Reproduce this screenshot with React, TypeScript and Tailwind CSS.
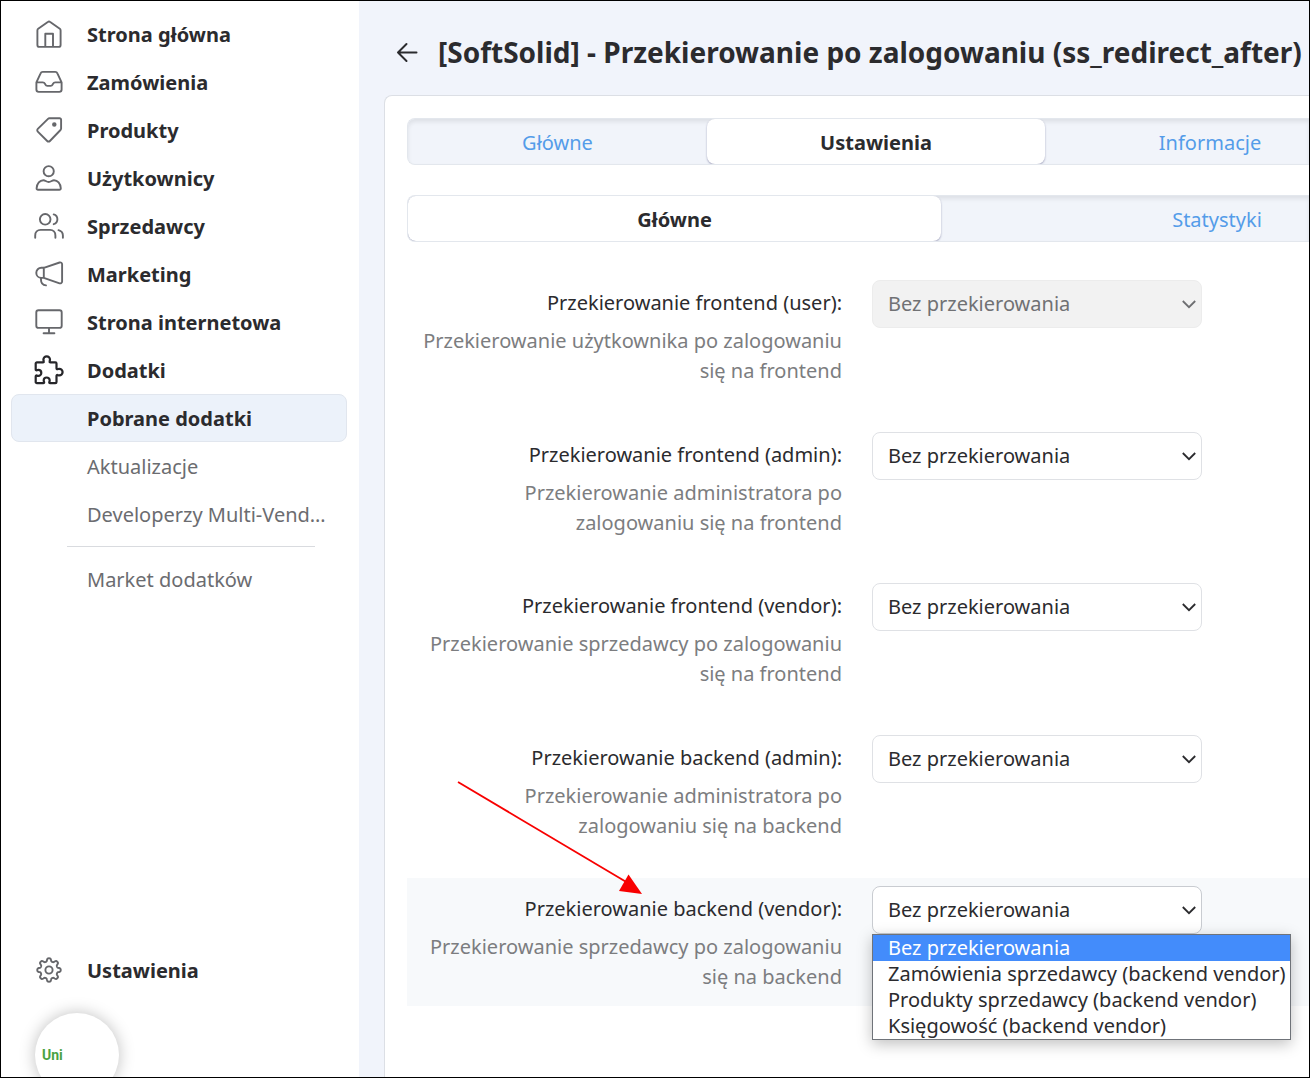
import React, { useState } from "react";

interface NavItem {
  label: string;
  icon: React.ReactNode;
  dark?: boolean;
}

interface RedirectField {
  id: string;
  label: string;
  help: string[];
  disabled?: boolean;
  open?: boolean;
}

interface TabItem {
  label: string;
  width: string;
}

// wavy outline with eight rounded teeth around the centre of a 32px box
const gearPath = (() => {
  const points: string[] = [];
  for (let i = 0; i < 160; i++) {
    const a = (i / 160) * Math.PI * 2;
    const r = 10.2 + 1.6 * Math.tanh(1.8 * Math.cos(8 * a));
    points.push(
      `${(16 + r * Math.cos(a)).toFixed(2)} ${(16 + r * Math.sin(a)).toFixed(2)}`,
    );
  }
  return `M${points.join("L")}Z`;
})();

const navItems: NavItem[] = [
  {
    label: "Strona główna",
    icon: (
      <path d="M6.3 28.9h19.4a1.9 1.9 0 0 0 1.9-1.9V12.4a2 2 0 0 0-.8-1.6L17.2 4a2 2 0 0 0-2.4 0l-9.6 6.8a2 2 0 0 0-.8 1.6V27a1.9 1.9 0 0 0 1.900 1.900zM12.3 28.9V15.8H20v13.100" />
    ),
  },
  {
    label: "Zamówienia",
    icon: (
      <path d="M3.4 16.4v7.2a2.3 2.3 0 0 0 2.3 2.3h20.6a2.3 2.3 0 0 0 2.3-2.3v-7.2L24.4 7.3a2.3 2.3 0 0 0-2.1-1.4H9.7a2.3 2.3 0 0 0-2.1 1.4zM3.4 16.4h6.4c1 0 1.7.5 2.1 1.3l.5 1c.4.8 1 1.2 1.9 1.2h3.4c.9 0 1.5-.4 1.9-1.2l.5-1c.4-.8 1.1-1.3 2.1-1.3h6.4" />
    ),
  },
  {
    label: "Produkty",
    icon: (
      <>
        <path d="M16.4 4.3h10.2a1.5 1.5 0 0 1 1.5 1.5v8.8c0 .6-.2 1-.6 1.4L16.9 27a1.9 1.9 0 0 1-2.7 0l-9.400-9.400a1.900 1.900 0 0 1 0-2.700L15 4.900c.4-.4.9-.6 1.400-.6z" />
        <circle cx="21.3" cy="10.6" r="1.3" fill="currentColor" />
      </>
    ),
  },
  {
    label: "Użytkownicy",
    icon: (
      <>
        <circle cx="15.7" cy="9.2" r="5.1" />
        <path d="M5 27.8h21.4a1.4 1.4 0 0 0 1.4-1.5c-.3-4.9-3.3-8.1-6.8-8.1-1.9 0-2.9 1.8-5.3 1.8s-3.4-1.8-5.3-1.8c-3.5 0-6.5 3.2-6.8 8.1A1.4 1.4 0 0 0 5 27.8z" />
      </>
    ),
  },
  {
    label: "Sprzedawcy",
    icon: (
      <>
        <circle cx="12.2" cy="9.3" r="5.3" />
        <path d="M20.7 4.4a5.1 5.1 0 0 1 0 9.8M2.2 27.8v-2.4c0-3.2 2.2-5.5 5.4-5.5h9.4c3.2 0 5.4 2.3 5.4 5.5v2.4M25.5 20.2c2.7.7 4.4 2.7 4.4 5.4v2.2" />
      </>
    ),
  },
  {
    label: "Marketing",
    icon: (
      <path d="M10.8 9.8l15.8-5.3a1.9 1.9 0 0 1 2.5 1.8v17.2a1.9 1.9 0 0 1-2.5 1.8l-15.8-5.400zM10.8 9.8H8.3a5 5 0 0 0-5 5v.1a5 5 0 0 0 5 5h2.5M8 20v1.8c0 3.2 1.7 5.4 5 5.6" />
    ),
  },
  {
    label: "Strona internetowa",
    icon: (
      <>
        <rect x="3.3" y="4.3" width="25.4" height="17.6" rx="2.2" />
        <path d="M16 22v5M10.6 27.3h10.8" />
      </>
    ),
  },
  {
    label: "Dodatki",
    dark: true,
    icon: (
      <path d="M3.9 8.4h6c.8 0 1.1-.5.9-1.1-.2-.7-.4-1-.4-1.7a3.3 3.3 0 0 1 6.6 0c0 .7-.2 1-.4 1.7-.2.6.1 1.1.9 1.1h4.8a1.2 1.2 0 0 1 1.2 1.2v4.7c0 .8.5 1.1 1.1.9.7-.2 1-.4 1.7-.4a3.3 3.3 0 0 1 0 6.6c-.7 0-1-.2-1.7-.4-.6-.2-1.1.1-1.1.9v6a1.2 1.2 0 0 1-1.2 1.2h-5.2c-.7 0-1-.5-.8-1.1.3-.6.4-.9.4-1.5a3 3 0 0 0-6 0c0 .6.1.9.4 1.5.2.6-.1 1.1-.8 1.1H3.900a1.2 1.2 0 0 1-1.2-1.2v-5.5c0-.8.5-1.1 1.1-.9.6.3.9.4 1.5.4a3 3 0 0 0 0-6c-.6 0-.9.1-1.5.4-.6.2-1.1-.1-1.1-.9V9.6a1.2 1.2 0 0 1 1.2-1.2z" />
    ),
  },
];

const mainTabs: TabItem[] = [
  { label: "Główne", width: "w-[299px]" },
  { label: "Ustawienia", width: "w-[338px]" },
  { label: "Informacje", width: "w-[330px]" },
];

const sectionTabs: TabItem[] = [
  { label: "Główne", width: "w-[533px]" },
  { label: "Statystyki", width: "w-[552px]" },
];

const fields: RedirectField[] = [
  {
    id: "frontend_user",
    label: "Przekierowanie frontend (user):",
    help: ["Przekierowanie użytkownika po zalogowaniu", "się na frontend"],
    disabled: true,
  },
  {
    id: "frontend_admin",
    label: "Przekierowanie frontend (admin):",
    help: ["Przekierowanie administratora po", "zalogowaniu się na frontend"],
  },
  {
    id: "frontend_vendor",
    label: "Przekierowanie frontend (vendor):",
    help: ["Przekierowanie sprzedawcy po zalogowaniu", "się na frontend"],
  },
  {
    id: "backend_admin",
    label: "Przekierowanie backend (admin):",
    help: ["Przekierowanie administratora po", "zalogowaniu się na backend"],
  },
  {
    id: "backend_vendor",
    label: "Przekierowanie backend (vendor):",
    help: ["Przekierowanie sprzedawcy po zalogowaniu", "się na backend"],
    open: true,
  },
];

const options = [
  "Bez przekierowania",
  "Zamówienia sprzedawcy (backend vendor)",
  "Produkty sprzedawcy (backend vendor)",
  "Księgowość (backend vendor)",
];

const NavLink: React.FC<NavItem> = ({ label, icon, dark }) => (
  <a
    href="#"
    className="flex h-12 items-center gap-[22px] pl-[22px] text-xl font-bold text-[#2b2b2e]"
  >
    <svg
      viewBox="0 0 32 32"
      className={`size-8 shrink-0 ${dark ? "text-[#26262a]" : "text-[#66676b]"}`}
      fill="none"
      stroke="currentColor"
      strokeWidth={dark ? 2.2 : 1.9}
      strokeLinecap="round"
      strokeLinejoin="round"
      aria-hidden="true"
    >
      {icon}
    </svg>
    <span className="pt-0.5">{label}</span>
  </a>
);

const Sidebar = () => (
  <aside className="flex w-[358px] shrink-0 flex-col bg-white px-2.5 pt-[9px]">
    <nav className="flex flex-1 flex-col">
      {navItems.map((item) => (
        <NavLink key={item.label} {...item} />
      ))}
      <a
        href="#"
        className="mr-0.5 flex h-12 items-center rounded-lg border border-[#e1e6ee] bg-[#ecf2fa] pt-0.5 pl-[75px] text-xl font-bold text-[#2b2b2e]"
      >
        Pobrane dodatki
      </a>
      <a href="#" className="flex h-12 items-center pt-0.5 pl-19 text-xl text-[#6b6c70]">
        Aktualizacje
      </a>
      <a href="#" className="flex h-12 items-center pt-0.5 pl-19 text-xl text-[#6b6c70]">
        Developerzy Multi-Vend…
      </a>
      <hr className="mt-2 mr-[34px] mb-2 ml-14 border-[#d9dbdf]" />
      <a href="#" className="flex h-12 items-center pt-0.5 pl-19 text-xl text-[#6b6c70]">
        Market dodatków
      </a>
      <div className="mt-auto">
        <NavLink
          label="Ustawienia"
          icon={
            <>
              <path d={gearPath} />
              <circle cx="16" cy="16" r="3.6" />
            </>
          }
        />
      </div>
    </nav>
    <div className="mt-[19px] -mb-5 ml-6 flex size-[84px] shrink-0 items-center rounded-full bg-white pl-[7px] font-['Roboto',sans-serif] text-sm font-bold text-[#4aa343] shadow-[0_0_16px_rgba(0,0,0,0.25)]">
      Uni
    </div>
  </aside>
);

const Tabs = ({
  tabs,
  active,
  onSelect,
}: {
  tabs: TabItem[];
  active: number;
  onSelect: (index: number) => void;
}) => (
  <div
    role="tablist"
    className="flex h-[47px] overflow-hidden rounded-l-lg border border-r-0 border-[#e3e7ed] bg-[#f1f4fa] shadow-[inset_0_3px_4px_rgba(0,0,0,0.08)]"
  >
    {tabs.map((tab, index) => (
      <button
        key={tab.label}
        type="button"
        role="tab"
        aria-selected={index === active}
        onClick={() => onSelect(index)}
        className={`shrink-0 pt-0.5 text-xl ${tab.width} ${
          index === active
            ? "rounded-lg bg-white font-bold text-[#2b2b2e] shadow-[0_1px_2px_rgba(60,60,110,0.45)]"
            : "text-[#549ce9]"
        }`}
      >
        {tab.label}
      </button>
    ))}
  </div>
);

const OptionList = () => (
  <ul
    role="listbox"
    aria-label="Przekierowanie backend (vendor)"
    className="absolute top-12 left-0 z-10 w-[419px] border border-[#6f7379] bg-white text-xl leading-[26px] text-[#2b2b2e] shadow-[0_4px_14px_rgba(0,0,0,0.25)]"
  >
    {options.map((option, index) => (
      <li
        key={option}
        role="option"
        aria-selected={index === 0}
        className={`pl-[15px] whitespace-nowrap ${index === 0 ? "bg-[#438cfb] text-white" : ""}`}
      >
        {option}
      </li>
    ))}
  </ul>
);

const FieldRow: React.FC<RedirectField> = ({ id, label, help, disabled, open }) => (
  <div className={`flex h-32 gap-[30px] pt-2 ${open ? "bg-[#f7f9fb]" : ""}`}>
    <div className="w-[435px] shrink-0 text-right text-xl leading-[30px]">
      <label htmlFor={id} className="mt-2 mb-2 block text-[#2b2b2e]">
        {label}
      </label>
      <p id={`${id}_help`} className="whitespace-pre text-[#7c7d80]">
        {help.join("\n")}
      </p>
    </div>
    <div className="relative h-12 w-[330px] shrink-0">
      <select
        id={id}
        disabled={disabled}
        aria-describedby={`${id}_help`}
        className={`size-full appearance-none rounded-lg border pl-[15px] text-xl ${
          disabled
            ? "border-[#ececec] bg-[#f2f2f2] text-[#707174] opacity-100"
            : open
              ? "border-[#c9ccd1] bg-white text-[#2b2b2e]"
              : "border-[#dfe1e5] bg-white text-[#2b2b2e]"
        }`}
      >
        {options.map((option) => (
          <option key={option}>{option}</option>
        ))}
      </select>
      <svg
        viewBox="0 0 16 16"
        className={`pointer-events-none absolute top-4 right-[5px] size-4 ${disabled ? "text-[#6e6f72]" : "text-[#2b2b2e]"}`}
        fill="none"
        stroke="currentColor"
        strokeWidth="1.8"
        aria-hidden="true"
      >
        <path d="M1.8 5l6.2 6.2L14.2 5" />
      </svg>
      {open && <OptionList />}
    </div>
  </div>
);

export default function App() {
  const [tab, setTab] = useState(1);
  const [section, setSection] = useState(0);

  return (
    <div className="relative flex h-screen overflow-hidden border border-black bg-[#f1f4fb] font-['Noto_Sans',sans-serif] text-xl">
      <Sidebar />
      <main className="flex min-w-0 flex-1 flex-col overflow-hidden pl-[25px]">
        <header className="flex h-[94px] shrink-0 items-center gap-5 pt-2.5 pl-3 text-[#2b2b2e]">
          <button type="button" aria-label="Wstecz">
            <svg
              viewBox="0 0 22 22"
              className="size-[22px]"
              fill="none"
              stroke="currentColor"
              strokeWidth="2"
              strokeLinecap="round"
              strokeLinejoin="round"
            >
              <path d="M20.5 10.5H2M10.5 2L2 10.5l8.5 8.5" />
            </svg>
          </button>
          <h1 className="text-[28px] font-bold whitespace-nowrap">
            [SoftSolid] - Przekierowanie po zalogowaniu (ss_redirect_after)
          </h1>
        </header>
        <section className="flex-1 rounded-tl-lg border-t border-l border-[#dcdfe5] bg-white pt-[22px] pl-[22px]">
          <Tabs tabs={mainTabs} active={tab} onSelect={setTab} />
          <div className="mt-[30px]">
            <Tabs tabs={sectionTabs} active={section} onSelect={setSection} />
          </div>
          <form className="mt-[30px] flex min-h-[734px] flex-col justify-between">
            {fields.map((field) => (
              <FieldRow key={field.id} {...field} />
            ))}
          </form>
        </section>
      </main>
      {/* pointer to the vendor backend setting */}
      <svg
        viewBox="0 0 190 116"
        className="pointer-events-none absolute top-[779px] left-[455px] h-[116px] w-[190px]"
        aria-hidden="true"
      >
        <path d="M2 2l170 101" stroke="#f80000" strokeWidth="1.8" />
        <path d="M186 114l-13.5-19.5-9.5 16.5z" fill="#f80000" />
      </svg>
    </div>
  );
}
